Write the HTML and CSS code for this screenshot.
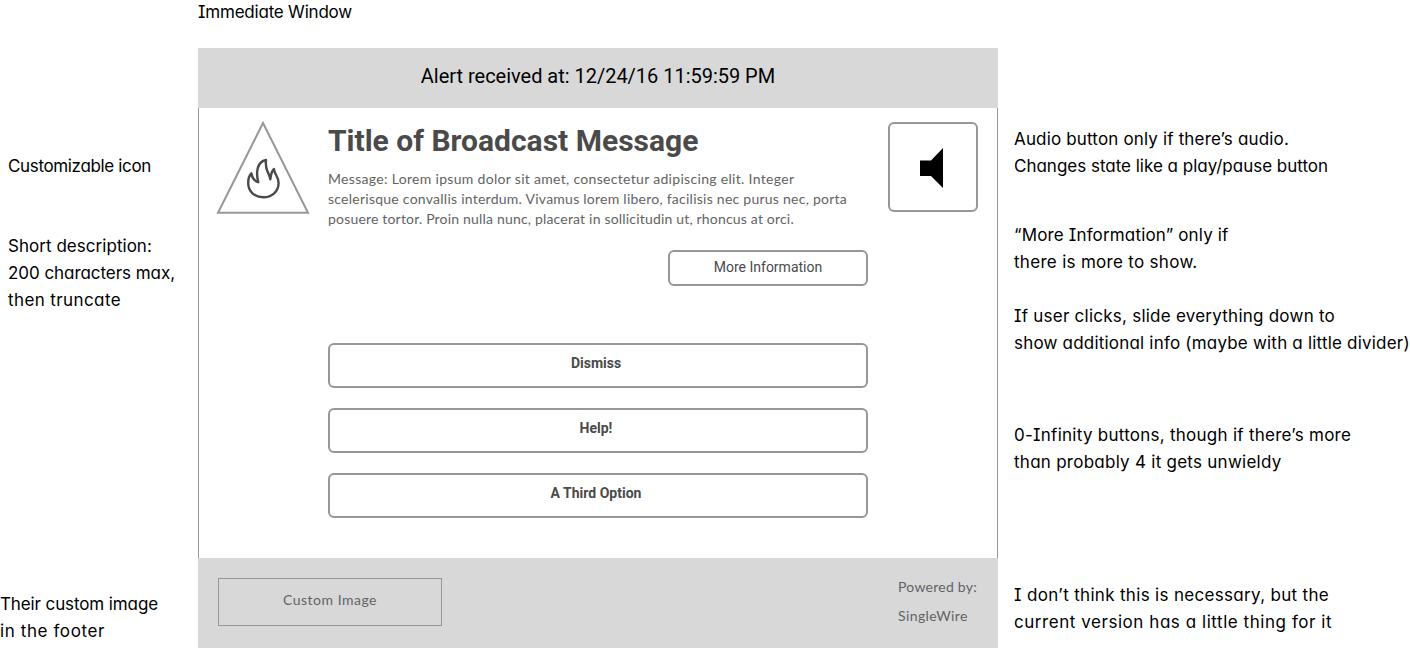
FILE: index.html
```html
<!DOCTYPE html>
<html lang="en">
<head>
<meta charset="utf-8">
<title>Immediate Window</title>
<link rel="stylesheet" href="styles.css">
</head>
<body>
<div class="board">
  <aside class="notes notes-left">
    <p class="note note-icon"><span>Customizable icon</span></p>
    <p class="note note-short"><span>Short description:</span><span>200 characters max,</span><span>then truncate</span></p>
    <p class="note note-image"><span>Their custom image</span><span>in the footer</span></p>
  </aside>
  <main class="center">
    <h1 class="note caption"><span>Immediate Window</span></h1>
    <section class="window">
      <header class="window-header">Alert received at: 12/24/16 11:59:59 PM</header>
      <div class="window-body">
        <svg class="alert-icon" viewBox="0 0 92 94">
          <path d="M46 2 L91 91.800 H1 Z" fill="none" stroke="#979797" stroke-width="2"/>
          <path d="M49 39 C48.500 43 48.800 46.500 50.500 50.500 C51.600 53 52.800 55 53.300 58.300 C54 53.500 54.300 50 57 48 C57 53 61.600 55 61.600 62 C61.600 70.500 55 76.200 46.300 76.200 C37.500 76.200 31.200 70.500 31.200 62 C31.200 58 32 54.500 34.300 52.300 C35 56.500 37.500 60 41.300 61.200 C38.500 50.500 40.500 40.500 49 39 Z" fill="none" stroke="#4a4a4a" stroke-width="2.4" stroke-linejoin="round"/>
        </svg>
        <div class="content">
          <h2 class="title">Title of Broadcast Message</h2>
          <p class="message"><span>Message: Lorem ipsum dolor sit amet, consectetur adipiscing elit. Integer</span><span>scelerisque convallis interdum. Vivamus lorem libero, facilisis nec purus nec, porta</span><span>posuere tortor. Proin nulla nunc, placerat in sollicitudin ut, rhoncus at orci.</span></p>
          <button class="button more">More Information</button>
          <div class="options">
            <button class="button option">Dismiss</button>
            <button class="button option">Help!</button>
            <button class="button option">A Third Option</button>
          </div>
        </div>
        <button class="button audio" aria-label="Play audio">
          <svg class="speaker" viewBox="0 0 23 40"><path d="M0 12.500 H11 L23 0 V40 L11 28 H0 Z"/></svg>
        </button>
      </div>
      <footer class="window-footer">
        <div class="custom-image">Custom Image</div>
        <div class="powered"><span>Powered by:</span><span>SingleWire</span></div>
      </footer>
    </section>
  </main>
  <aside class="notes notes-right">
    <p class="note note-audio"><span>Audio button only if there’s audio.</span><span>Changes state like a play/pause button</span></p>
    <p class="note note-more"><span>“More Information” only if</span><span>there is more to show.</span></p>
    <p class="note note-slide"><span>If user clicks, slide everything down to</span><span>show additional info (maybe with a little divider)</span></p>
    <p class="note note-buttons"><span>0-Infinity buttons, though if there’s more</span><span>than probably 4 it gets unwieldy</span></p>
    <p class="note note-powered"><span>I don’t think this is necessary, but the</span><span>current version has a little thing for it</span></p>
  </aside>
</div>
</body>
</html>
```
FILE: styles.css
```css
* { box-sizing: border-box; }
body { margin: 0; background: #fff; overflow: hidden; }
h1, h2, p { margin: 0; font-weight: 400; }

.board { display: grid; grid-template-columns: 198px 800px 412px; height: 648px; }

/* Annotations */
.notes { display: flex; flex-direction: column; }
.note { font: 400 17px/27px Chalkboard, Inter, sans-serif; font-feature-settings: "cv11", "cv08"; color: #000; white-space: nowrap; }
.note span, .message span, .powered span { display: block; width: max-content; }
.notes-left { padding: 153px 0 0 8px; }
.notes-right { padding: 126px 0 0 16px; }
.note-icon { letter-spacing: -0.35px; }
.note-short { margin-top: 53px; letter-spacing: 0.04px; }
.note-short span:nth-child(2) { letter-spacing: -0.05px; }
.note-short span:nth-child(3) { letter-spacing: 0.4px; }
.note-image { margin: 277px 0 0 -8px; letter-spacing: -0.11px; }
.note-image span:nth-child(2) { letter-spacing: 0.6px; }
.note-audio { letter-spacing: 0.16px; }
.note-audio span:nth-child(2) { letter-spacing: -0.01px; }
.note-more { margin-top: 42px; letter-spacing: 0.16px; }
.note-more span:nth-child(2) { letter-spacing: 0.3px; }
.note-slide { margin-top: 27px; letter-spacing: 0.24px; }
.note-slide span:nth-child(2) { letter-spacing: 0.2px; }
.note-buttons { margin-top: 65px; letter-spacing: 0.26px; }
.note-powered { margin-top: 106px; letter-spacing: 0.32px; }
.note-powered span:nth-child(2) { letter-spacing: 0.55px; }

/* Window */
.center { display: flex; flex-direction: column; }
.caption { height: 48px; margin-top: -1px; margin-bottom: 1px; letter-spacing: -0.21px; }
.window { width: 800px; height: 600px; display: flex; flex-direction: column; }
.window-header { height: 60px; background: #d8d8d8; text-align: center; font: 400 20px/56px Roboto, sans-serif; letter-spacing: -0.02px; color: #000; }
.window-body { height: 450px; display: flex; border: solid #979797; border-width: 0 1px; padding: 14px 19px 0 18px; }
.alert-icon { width: 92px; height: 94px; margin-top: -1px; flex: none; overflow: visible; }
.content { width: 540px; margin: 0 20px 0 19px; display: flex; flex-direction: column; }
.title { font: 700 30px/38px Roboto, sans-serif; color: #4a4a4a; white-space: nowrap; }
.message { margin-top: 9px; font: 400 14px/20px Lato, sans-serif; letter-spacing: 0.31px; color: #636363; white-space: nowrap; }
.message span:nth-child(2) { letter-spacing: 0.25px; }
.message span:nth-child(3) { letter-spacing: 0.185px; }

.button { display: flex; justify-content: center; align-items: center; padding: 0; border: 2px solid #979797; border-radius: 6px; background: #fff; font: 400 14px/16px Roboto, sans-serif; color: #4a4a4a; }
.more { align-self: flex-end; width: 200px; height: 36px; margin-top: 21px; padding-bottom: 2px; }
.options { display: flex; flex-direction: column; gap: 20px; margin-top: 57px; }
.option { height: 45px; font-weight: 700; padding: 0 4px 5px 0; }
.audio { width: 90px; height: 90px; flex: none; }
.speaker { width: 23px; height: 40px; margin-top: 1px; margin-right: 3px; }

.window-footer { height: 90px; background: #d8d8d8; display: flex; justify-content: space-between; padding: 20px 20px 0; font: 400 14px/29px Lato, sans-serif; color: #636363; }
.custom-image { width: 224px; height: 48px; border: 1px solid #979797; text-align: center; line-height: 42px; letter-spacing: 0.5px; }
.powered { width: 80px; margin-top: -6px; letter-spacing: 0.26px; white-space: nowrap; }
.powered span:nth-child(2) { letter-spacing: 0.4px; }
```
